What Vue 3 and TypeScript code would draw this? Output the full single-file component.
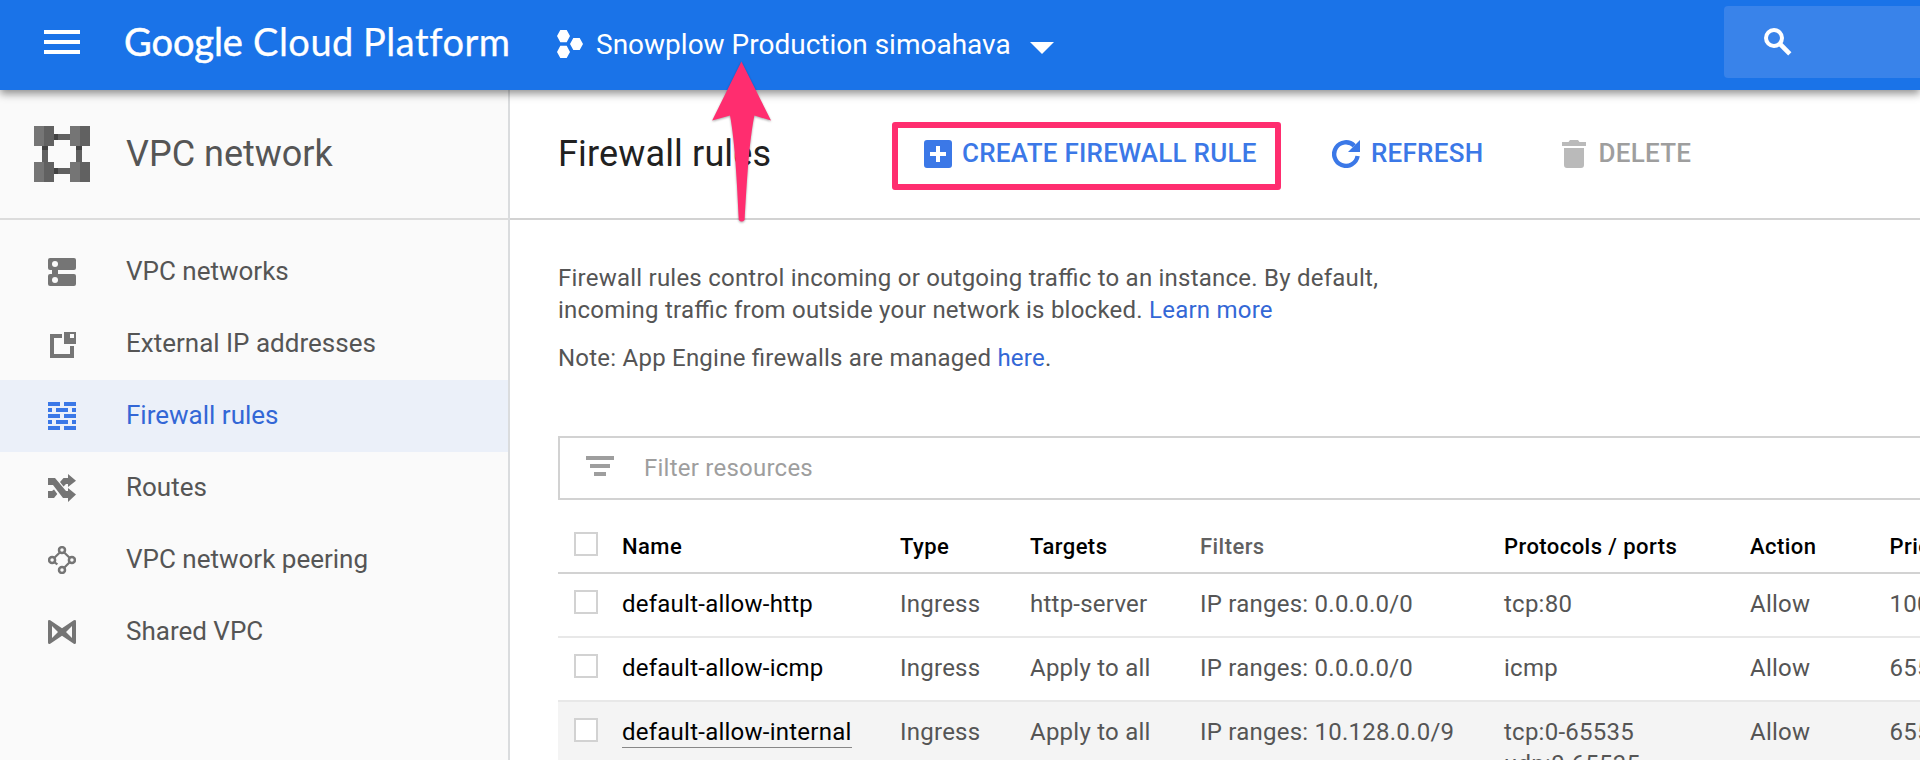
<script setup lang="ts">
interface NavItem {
  id: string
  label: string
  active?: boolean
}

interface Rule {
  name: string
  type: string
  targets: string
  filters: string
  ports: string[]
  action: string
  priority: string
  hovered?: boolean
}

const navItems: NavItem[] = [
  { id: 'networks', label: 'VPC networks' },
  { id: 'external', label: 'External IP addresses' },
  { id: 'firewall', label: 'Firewall rules', active: true },
  { id: 'routes', label: 'Routes' },
  { id: 'peering', label: 'VPC network peering' },
  { id: 'shared', label: 'Shared VPC' },
]

const rules: Rule[] = [
  { name: 'default-allow-http', type: 'Ingress', targets: 'http-server', filters: 'IP ranges: 0.0.0.0/0', ports: ['tcp:80'], action: 'Allow', priority: '1000' },
  { name: 'default-allow-icmp', type: 'Ingress', targets: 'Apply to all', filters: 'IP ranges: 0.0.0.0/0', ports: ['icmp'], action: 'Allow', priority: '65534' },
  { name: 'default-allow-internal', type: 'Ingress', targets: 'Apply to all', filters: 'IP ranges: 10.128.0.0/9', ports: ['tcp:0-65535', 'udp:0-65535'], action: 'Allow', priority: '65534', hovered: true },
]
</script>

<template>
  <div class="console">
    <header class="topbar">
      <svg class="menu" viewBox="0 0 36 24"><path d="M0 0h36v4H0zM0 10h36v4H0zM0 20h36v4H0z" /></svg>
      <div class="brand"><span class="brand-google">Google</span><span>Cloud</span><span class="brand-platform">Platform</span></div>
      <div class="project">
        <svg class="project-icon" viewBox="0 0 26 28">
          <path d="M0 6 3.3 0h6.4L13 6l-3.3 6.2H3.3zM13 14l3.3-6.1h6.4L26 14l-3.3 6.1h-6.4zM0 22l3.3-6.2h6.4L13 22l-3.3 6H3.3z" />
        </svg>
        <span class="project-name">Snowplow Production simoahava</span>
        <svg class="caret" viewBox="0 0 24 12"><path d="M0 0h24L12 12z" /></svg>
      </div>
      <div class="search">
        <svg viewBox="0 0 28 28">
          <circle cx="10" cy="10" r="8" fill="none" stroke="#fff" stroke-width="4" />
          <path d="m15.5 15.5 10.3 10.3" stroke="#fff" stroke-width="4.6" />
        </svg>
      </div>
    </header>

    <div class="body">
      <aside class="sidebar">
        <div class="product">
          <svg viewBox="0 0 56 56">
            <g v-for="y in [0, 36]" :key="y">
              <g v-for="x in [0, 36]" :key="x">
                <rect :x="x" :y="y" width="10" height="20" fill="#757575" />
                <rect :x="x + 10" :y="y" width="10" height="20" fill="#616161" />
              </g>
            </g>
            <path d="M24 8h12v6H24zM24 42h12v6H24zM8 24h6v12H8zM42 24h6v12h-6z" fill="#616161" />
            <path d="M20 8h4v6h-4zM20 42h4v6h-4zM8 20h6v4H8zM42 20h6v4h-6z" fill="#424242" />
          </svg>
          <span>VPC network</span>
        </div>
        <nav>
          <a v-for="item in navItems" :key="item.id" class="nav-item" :class="{ active: item.active }">
            <svg viewBox="0 0 28 28">
              <g v-if="item.id === 'networks'">
                <rect width="28" height="12" rx="2" />
                <rect y="16" width="28" height="12" rx="2" />
                <rect x="4" y="11" width="6" height="6" />
                <circle cx="7" cy="6" r="3" class="hole" />
                <circle cx="7" cy="22" r="3" class="hole" />
              </g>
              <path v-else-if="item.id === 'external'" fill-rule="evenodd" d="M2 4h12v4H6v16h16v-8h4v12H2zM16 2h12v12H16zM22 4v4h4V4z" />
              <path v-else-if="item.id === 'firewall'" d="M0 0h12v4H0zM16 0h12v4H16zM0 6h4v4H0zM8 6h12v4H8zM24 6h4v4h-4zM0 12h12v4H0zM16 12h12v4H16zM0 18h4v4H0zM8 18h12v4H8zM24 18h4v4h-4zM0 24h12v4H0zM16 24h12v4H16z" />
              <path v-else-if="item.id === 'routes'" d="M0 4h7l11 13h2v-3l8 6.5-8 7.5v-4h-5L5 11H0zM20 0l8 6.8L20 13v-3h-2l-2.5 2.6L12 8l3.5-4H20zM0 17h4l2-1.6L9.3 20 6 24H0z" />
              <g v-else-if="item.id === 'peering'" fill="none" stroke="#757575">
                <g stroke-width="2.5">
                  <circle cx="14" cy="4.1" r="3" />
                  <circle cx="4.1" cy="14" r="3" />
                  <circle cx="23.9" cy="14" r="3" />
                  <circle cx="14" cy="23.9" r="3" />
                </g>
                <path stroke-width="2.2" d="m11.8 6.5-5.4 5.2M16.2 6.5l5.4 5.2M21.6 16.3l-5.4 5.4M6.2 16.2l3.2 2.2" />
              </g>
              <path v-else fill-rule="evenodd" d="M2.2 2.3 14 10.2l11.8-7.9Q28 1.3 28 3.4v21.2q0 2.1-2.2 1.1L14 17.8 2.2 25.7Q0 26.7 0 24.6V3.4q0-2.1 2.2-1.1zM4 8v12l6-6zM24 8v12l-6-6z" />
            </svg>
            <span>{{ item.label }}</span>
          </a>
        </nav>
      </aside>

      <main class="main">
        <div class="toolbar">
          <h1>Firewall rules</h1>
          <button class="action create">
            <svg viewBox="0 0 28 28">
              <path fill-rule="evenodd" d="M3 0h22q3 0 3 3v22q0 3-3 3H3q-3 0-3-3V3q0-3 3-3zM12 6v6H6v4h6v6h4v-6h6v-4h-6V6z" />
            </svg>
            <span>CREATE FIREWALL RULE</span>
          </button>
          <button class="action refresh">
            <svg viewBox="0 0 28 28">
              <path d="M25.6 16A11.8 11.8 0 1 1 22.3 5.7" fill="none" stroke="#3b78e7" stroke-width="4.4" />
              <path d="M28 0v12H16z" />
            </svg>
            <span>REFRESH</span>
          </button>
          <button class="action delete">
            <svg viewBox="0 0 24 28"><path d="M0 2h6.5L8 0h8l1.5 2H24v4H0zM2 8h20v17q0 3-3 3H5q-3 0-3-3z" /></svg>
            <span>DELETE</span>
          </button>
        </div>

        <div class="content">
          <p class="intro">Firewall rules control incoming or outgoing traffic to an instance. By default,<br />incoming traffic from outside your network is blocked. <a>Learn more</a></p>
          <p class="intro">Note: App Engine firewalls are managed <a>here</a>.</p>

          <div class="filter">
            <svg viewBox="0 0 28 20"><path d="M0 0h28v4H0zM4 8h20v4H4zM8 16h12v4H8z" /></svg>
            <span>Filter resources</span>
          </div>

          <div class="table">
            <div class="row head">
              <i class="checkbox"></i>
              <span>Name</span>
              <span>Type</span>
              <span>Targets</span>
              <span class="unsorted">Filters</span>
              <span>Protocols / ports</span>
              <span>Action</span>
              <span>Priority</span>
            </div>
            <div v-for="rule in rules" :key="rule.name" class="row" :class="{ hovered: rule.hovered }">
              <i class="checkbox"></i>
              <span class="name"><a>{{ rule.name }}</a></span>
              <span>{{ rule.type }}</span>
              <span>{{ rule.targets }}</span>
              <span>{{ rule.filters }}</span>
              <span class="ports"><span v-for="port in rule.ports" :key="port">{{ port }}</span></span>
              <span>{{ rule.action }}</span>
              <span>{{ rule.priority }}</span>
            </div>
          </div>
        </div>
      </main>
    </div>

    <div class="callout-box"></div>
    <svg class="callout-arrow" viewBox="0 0 64 164">
      <path d="M31.4 1.5 61 60.6 44.4 55.5C39 82 36.8 122 34.6 160q-3 3.2-5.8 0C27 122 25 82 20 55.5L2.2 60.6z" />
    </svg>
  </div>
</template>

<style>
body {
  margin: 0;
  overflow: hidden;
}
</style>

<style scoped>
.console {
  position: relative;
  display: flex;
  flex-direction: column;
  width: 1920px;
  height: 760px;
  overflow: hidden;
  background: #fff;
  color: #555;
  font-family: Roboto, "Liberation Sans", sans-serif;
  font-size: 24px;
}
svg {
  display: block;
  flex: none;
}
.topbar {
  display: flex;
  position: relative;
  z-index: 1;
  flex: none;
  height: 90px;
  background: #1a73e8;
  box-shadow: 0 4px 8px rgba(0, 0, 0, 0.42);
  color: #fff;
  fill: #fff;
}
.menu {
  width: 36px;
  height: 24px;
  margin: 30px 44px 0;
}
.brand {
  display: grid;
  grid-template-columns: 129px 110px 194px;
  height: 82px;
  font: 38px/82px Lato, "Open Sans", sans-serif;
  letter-spacing: 0.5px;
  -webkit-text-stroke: 0.25px #fff;
}
.brand-google {
  letter-spacing: -0.1px;
  -webkit-text-stroke: 0.5px #fff;
}
.brand-platform {
  letter-spacing: 0.55px;
  font-variant-ligatures: none;
}
.project {
  display: flex;
  align-items: center;
  height: 88px;
}
.project-icon {
  width: 26px;
  height: 28px;
}
.project-name {
  width: 434px;
  margin-left: 13px;
  font-size: 28px;
}
.caret {
  width: 24px;
  height: 12px;
  margin-top: 7px;
}
.search {
  flex: none;
  box-sizing: border-box;
  width: 220px;
  height: 72px;
  margin: 6px -24px 0 auto;
  padding: 22px 0 0 40px;
  border-radius: 4px;
  background: #3983ea;
}
.search svg {
  width: 28px;
  height: 28px;
}
.body {
  display: flex;
  flex: 1;
  min-height: 0;
}
.sidebar {
  flex: none;
  box-sizing: border-box;
  width: 510px;
  border-right: 2px solid #dadcde;
  background: #fafafa;
}
.product {
  display: flex;
  align-items: center;
  height: 128px;
  padding-left: 34px;
  border-bottom: 2px solid #dcdcdc;
  font-size: 36px;
}
.product svg {
  width: 56px;
  height: 56px;
  margin-right: 36px;
}
nav {
  padding-top: 16px;
}
.nav-item {
  display: flex;
  align-items: center;
  height: 72px;
  padding-left: 48px;
  font-size: 26px;
  fill: #757575;
}
.nav-item svg {
  width: 28px;
  height: 28px;
  margin-right: 50px;
}
.nav-item span {
  margin-top: -2px;
}
.nav-item .hole {
  fill: #fafafa;
}
.nav-item.active {
  background: #ebf0f9;
  color: #3367d6;
  fill: #3b78e7;
}
.main {
  flex: 1;
  min-width: 0;
}
.toolbar {
  display: flex;
  align-items: center;
  height: 128px;
  padding-left: 48px;
  border-bottom: 2px solid #d2d2d2;
}
h1 {
  width: 366px;
  margin: 0;
  color: #212121;
  font-size: 36px;
  font-weight: 400;
  letter-spacing: 0.15px;
}
.action {
  display: flex;
  flex: none;
  align-items: center;
  padding: 0;
  border: 0;
  background: none;
  color: #3b78e7;
  fill: #3b78e7;
  font: 500 26px Roboto, "Liberation Sans", sans-serif;
  letter-spacing: 0.25px;
}
.action svg {
  width: 28px;
  height: 28px;
  margin-right: 10px;
}
.action span {
  margin-top: -2px;
}
.create {
  width: 408px;
}
.refresh svg {
  margin-right: 11px;
}
.refresh {
  width: 230px;
}
.delete {
  color: #9e9e9e;
  fill: #bababa;
}
.delete svg {
  width: 24px;
  margin-right: 12.5px;
}
.content {
  padding: 42px 0 0 48px;
}
.intro {
  margin: 0 0 16px;
  line-height: 32px;
  letter-spacing: 0.23px;
  font-feature-settings: "liga" 1;
  white-space: nowrap;
}
.intro a {
  color: #3367d6;
}
.filter {
  display: flex;
  align-items: center;
  box-sizing: border-box;
  width: 1500px;
  height: 64px;
  margin-top: 62px;
  padding-left: 26px;
  border: 2px solid #d2d2d2;
  color: #9e9e9e;
  fill: #9e9e9e;
  letter-spacing: 0.24px;
}
.filter svg {
  width: 28px;
  height: 20px;
  margin: -4px 30px 0 0;
}
.table {
  width: 1500px;
  margin-top: 16px;
}
.row {
  display: grid;
  grid-template-columns: 64px 278px 130px 170px 304px 246px 139.5px 1fr;
  align-items: start;
  box-sizing: border-box;
  height: 64px;
  padding-top: 14px;
  border-bottom: 2px solid #e8e8e8;
  line-height: 32px;
  letter-spacing: 0.24px;
}
.head {
  height: 58px;
  border-bottom-color: #d2d2d2;
  color: #000;
  font-size: 22px;
  font-weight: 500;
  line-height: 34px;
  letter-spacing: 0.44px;
}
.unsorted {
  color: #616161;
}
.checkbox {
  box-sizing: border-box;
  width: 24px;
  height: 24px;
  margin: 2px 0 0 16px;
  border: 2px solid #d2d2d2;
  background: #fff;
}
.name {
  color: #000;
}
.name a {
  display: inline-block;
  height: 31px;
}
.ports {
  display: flex;
  flex-direction: column;
}
.hovered {
  height: 96px;
  background: #f4f4f4;
}
.hovered .name a {
  border-bottom: 1px solid #888;
}
.callout-box {
  position: absolute;
  top: 122px;
  left: 892px;
  z-index: 2;
  box-sizing: border-box;
  width: 389px;
  height: 68px;
  border: 6px solid #ff2d6f;
  border-radius: 3px;
}
.callout-arrow {
  position: absolute;
  top: 60px;
  left: 710px;
  z-index: 2;
  width: 64px;
  height: 164px;
  fill: #ff2d6f;
  filter: drop-shadow(0 1px 1px rgba(0, 0, 0, 0.35));
}
</style>
